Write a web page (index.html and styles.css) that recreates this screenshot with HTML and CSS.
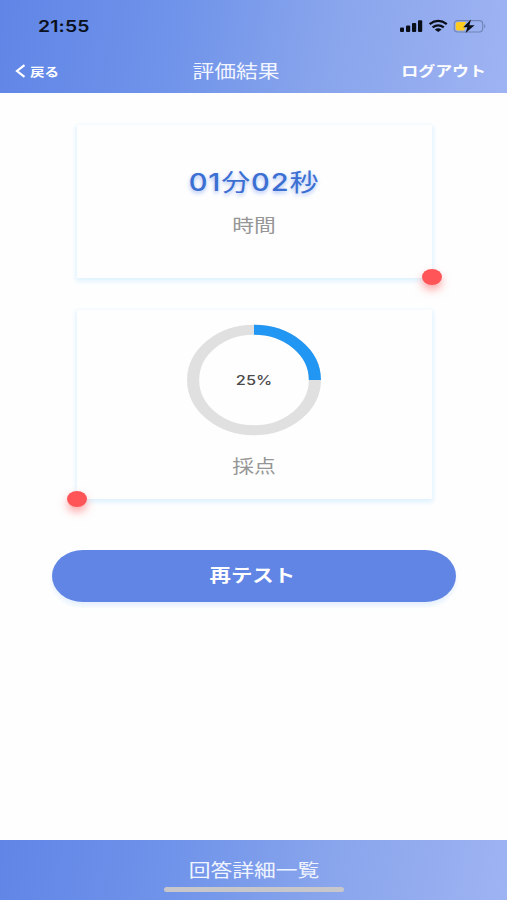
FILE: index.html
```
<!DOCTYPE html>
<html lang="ja">
<head>
<meta charset="utf-8">
<title>評価結果</title>
<link rel="stylesheet" href="styles.css">
</head>
<body>
<header class="header">
  <div class="status">
    <span class="clock wide">21:55</span>
    <svg class="status-icons" width="88" height="16" viewBox="0 0 88 16">
      <rect x="1" y="9.5" width="4" height="4.5" rx="1"/>
      <rect x="7" y="7.5" width="4.2" height="6.5" rx="1"/>
      <rect x="13" y="5" width="4.2" height="9" rx="1"/>
      <rect x="19" y="2.3" width="4.2" height="11.7" rx="1"/>
      <path class="arc" d="M30.6 6.1Q39.2 -0.3 47.8 6.1M33.6 9.4Q39.2 5.3 44.8 9.4"/>
      <path d="M35.8 11.4Q39.2 9 42.6 11.4L39.2 14Z"/>
      <rect class="shell" x="55.2" y="2.6" width="28.5" height="11.4" rx="3.5"/>
      <path class="nub" d="M85.2 6.1Q87.7 8.3 85.2 10.5Z"/>
      <path class="charge" d="M58.7 4H67.2L64.5 9H66.2L65.3 12.6H58.7Q56.7 12.6 56.7 10.6V6Q56.7 4 58.7 4Z"/>
      <path d="M72 1.6L64.2 9.2H68.4L66.6 15L75.6 7.2H70.4Z"/>
    </svg>
  </div>
  <nav class="nav">
    <a class="back">
      <svg width="11" height="14" viewBox="0 0 11 14"><path d="M9.5 1.2L2 7L9.5 12.8"/></svg>
      <span class="wide">戻る</span>
    </a>
    <h1 class="title"><span class="wide">評価結果</span></h1>
    <a class="logout"><span class="wide">ログアウト</span></a>
  </nav>
</header>
<main class="main">
  <section class="card card-time">
    <div class="time wide">01<span class="unit">分</span>02<span class="unit">秒</span></div>
    <div class="label wide">時間</div>
    <i class="dot dot-right"></i>
  </section>
  <section class="card card-score">
    <div class="gauge">
      <svg width="136" height="112" viewBox="0 0 136 112">
        <g transform="translate(68 56) scale(1.213 1)">
          <circle class="track" r="50.2"/>
          <path class="value" d="M0 -50.2A50.2 50.2 0 0 1 50.2 0"/>
        </g>
      </svg>
      <span class="percent"><span class="wide">25%</span></span>
    </div>
    <div class="label wide">採点</div>
    <i class="dot dot-left"></i>
  </section>
  <button class="retry"><span class="wide">再テスト</span></button>
</main>
<footer class="footer">
  <span class="wide">回答詳細一覧</span>
  <div class="home"></div>
</footer>
</body>
</html>
```
FILE: styles.css
```
* { box-sizing: border-box; }
body {
  margin: 0;
  height: 900px;
  display: flex;
  flex-direction: column;
  overflow: hidden;
  background: #fefefe;
  font-family: Inter, "Noto Sans CJK JP", sans-serif;
}
.wide { display: inline-block; transform: scaleX(1.21); white-space: nowrap; }
.header {
  height: 93px;
  background: linear-gradient(100deg, #6085e6 0%, #7094ea 35%, #89a5ec 65%, #9eb3f2 100%);
  color: #fff;
}
.status {
  height: 50px;
  padding: 2px 20px 0 38px;
  display: flex;
  align-items: center;
  justify-content: space-between;
}
.clock { color: #0a1020; font-size: 16px; font-weight: 600; letter-spacing: .15px; transform-origin: left; }
.status-icons { fill: #0a0e18; margin-top: -1px; }
.status-icons .arc { fill: none; stroke: #0a0e18; stroke-width: 2.3; }
.status-icons .shell { fill: none; stroke: #7183b5; stroke-width: 1.1; }
.status-icons .nub { fill: #7183b5; }
.status-icons .charge { fill: #fccb20; }
.nav {
  height: 40px;
  padding: 0 21px 0 15px;
  display: grid;
  grid-template-columns: 1fr auto 1fr;
  align-items: center;
}
.back { display: flex; align-items: center; gap: 4px; padding-top: 2px; font-size: 12px; font-weight: 700; }
.back .wide { transform-origin: left; }
.back svg { fill: none; stroke: #fff; stroke-width: 2.2; }
.title { margin: 0 29px 0 0; font-size: 18px; font-weight: 400; color: #f1f5ff; }
.logout { justify-self: end; font-size: 14px; font-weight: 700; }
.logout .wide { transform-origin: right; }
.main { flex: 1; display: flex; flex-direction: column; align-items: center; }
.card {
  position: relative;
  width: 355px;
  margin-left: 1px;
  display: flex;
  flex-direction: column;
  align-items: center;
  background: #fefefe;
  box-shadow: 0 2px 5px 1px #dcf1fd;
}
.card-time { height: 153px; margin-top: 32px; padding-top: 42px; }
.card-score { height: 189px; margin-top: 32px; padding-top: 14px; }
.time {
  height: 32px;
  line-height: 32px;
  font-size: 24px;
  font-weight: 500;
  letter-spacing: .7px;
  color: #3b6fd2;
  text-shadow: 0 2px 4px #a5bcf5;
}
.unit { font-weight: 400; }
.label { height: 26px; line-height: 26px; font-size: 18px; color: #969696; }
.card-time .label { margin-top: 14px; }
.card-score .label { margin-top: 18px; }
.gauge { display: grid; place-items: center; height: 112px; }
.gauge > * { grid-area: 1 / 1; }
.gauge svg { fill: none; stroke-width: 10; }
.track { stroke: #e0e0e0; }
.value { stroke: #2196f3; }
.percent { font-size: 13.5px; font-weight: 500; color: #4b4b4b; }
.dot {
  position: absolute;
  bottom: -8px;
  width: 20px;
  height: 16px;
  border-radius: 50%;
  background: #ff5558;
  box-shadow: 0 5px 8px rgba(255, 85, 88, .5);
}
.dot-right { right: -10px; bottom: -7px; }
.dot-left { left: -10px; }
.retry {
  width: 404px;
  height: 52px;
  margin-top: 51px;
  padding: 0 2px 0 0;
  border: 0;
  border-radius: 31px / 26px;
  background: #6085e5;
  box-shadow: 0 4px 4px #e6f1fd;
  color: #fff;
  font: 700 17.7px/52px Inter, "Noto Sans CJK JP", sans-serif;
}
.footer {
  height: 60px;
  padding-top: 18px;
  display: flex;
  flex-direction: column;
  align-items: center;
  background: linear-gradient(100deg, #6085e6 0%, #7094ea 35%, #89a5ec 65%, #9eb3f2 100%);
  color: #eff4ff;
  font-size: 18px;
  line-height: 26px;
}
.home { width: 180px; height: 5px; margin-top: 3px; border-radius: 3px; background: #c7c7cb; }
```
